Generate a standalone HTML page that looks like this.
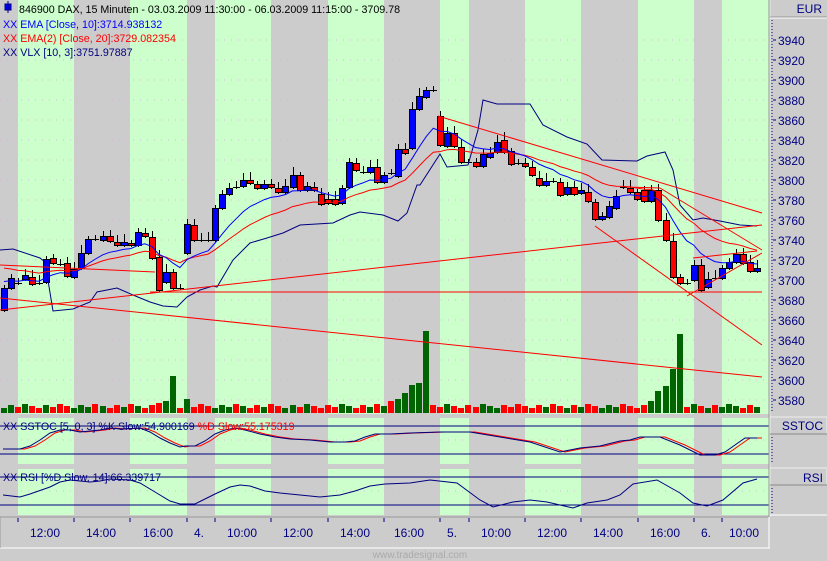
<!DOCTYPE html>
<html><head><meta charset="utf-8"><style>
html,body{margin:0;padding:0;background:#cccccc;width:827px;height:561px;overflow:hidden}
svg{display:block}
text{font-family:"Liberation Sans",Arial,sans-serif}
.lg{font-size:10.7px}
</style></head><body>
<svg id="s" width="827" height="561" xmlns="http://www.w3.org/2000/svg">
<rect width="827" height="561" fill="#cccccc"/>
<g id="bands"></g>
<g id="grid"></g>
<g id="main"></g>
<!-- legends -->
<rect x="5" y="4" width="6" height="6" fill="#0000ff" stroke="#000080"/>
<line x1="8" y1="1" x2="8" y2="13" stroke="#000080"/>
<text class="lg" x="19" y="13" fill="#000">846900  DAX, 15 Minuten - 03.03.2009 11:30:00 - 06.03.2009 11:15:00 - 3709.78</text>
<text class="lg" x="3" y="28" fill="#0000ff">XX EMA [Close, 10]:3714.938132</text>
<text class="lg" x="3" y="42" fill="#ff0000">XX EMA(2) [Close, 20]:3729.082354</text>
<text class="lg" x="3" y="56" fill="#000080">XX VLX [10, 3]:3751.97887</text>
<text class="lg" x="3" y="430" fill="#000080">XX SSTOC [5, 0, 3] %K Slow:54.900169 <tspan fill="#ff0000">%D Slow:55.175319</tspan></text>
<text class="lg" x="3" y="481" fill="#000080">XX RSI [%D Slow, 14]:66.339717</text>
<!-- right axis -->
<line x1="770" y1="0" x2="770" y2="517" stroke="#e8e8e8"/>
<line x1="769" y1="0" x2="769" y2="517" stroke="#999"/>
<line x1="770" y1="17" x2="827" y2="17" stroke="#999"/>
<line x1="770" y1="18" x2="827" y2="18" stroke="#fff"/>
<text x="822" y="13" font-size="12" fill="#000080" text-anchor="end">EUR</text>
<line x1="772" y1="20" x2="772" y2="413" stroke="#000080" stroke-dasharray="1,2"/>
<g id="axis" font-size="12" fill="#000080"></g>
<rect x="770" y="417" width="57" height="17" fill="#cccccc" stroke="#eee"/>
<line x1="770" y1="434" x2="827" y2="434" stroke="#888"/>
<text x="823" y="430" font-size="12" fill="#000080" text-anchor="end">SSTOC</text>
<line x1="772" y1="437" x2="772" y2="463" stroke="#000080" stroke-dasharray="1,2"/>
<rect x="770" y="468" width="57" height="17" fill="#cccccc" stroke="#eee"/>
<line x1="770" y1="485" x2="827" y2="485" stroke="#888"/>
<text x="823" y="482" font-size="12" fill="#000080" text-anchor="end">RSI</text>
<line x1="772" y1="488" x2="772" y2="514" stroke="#000080" stroke-dasharray="1,2"/>
<line x1="770" y1="515" x2="827" y2="515" stroke="#fff"/>
<!-- time axis -->
<line x1="0" y1="517" x2="769" y2="517" stroke="#999"/>
<line x1="0" y1="548" x2="770" y2="548" stroke="#fff"/>
<line x1="769" y1="517" x2="769" y2="548" stroke="#fff"/>
<line x1="0" y1="517" x2="0" y2="548" stroke="#999"/>
<g id="time" font-size="12" fill="#000080"></g>
<text x="420" y="558" font-size="10" fill="#aaaaaa" text-anchor="middle">www.tradesignal.com</text>
</svg>
<script>
var NS="http://www.w3.org/2000/svg";
function el(p,t,a){var e=document.createElementNS(NS,t);for(var k in a)e.setAttribute(k,a[k]);p.appendChild(e);return e;}
var s=document.getElementById('s');
var bands=document.getElementById('bands'),grid=document.getElementById('grid'),main=document.getElementById('main');
var gb=[[18,74],[130,187],[215,271],[328,384],[440,469],[525,581],[638,694],[722,769]];
var panels=[[0,414],[418,464],[469,515]];
panels.forEach(function(p){gb.forEach(function(b){el(bands,'rect',{x:b[0],y:p[0],width:b[1]-b[0],height:p[1]-p[0],fill:'#ccffcc'});});});
for(var y=40;y<=400;y+=20)el(grid,'line',{x1:0,y1:y,x2:769,y2:y,stroke:'#d8b8d8','stroke-dasharray':'1,6'});
[440,491].forEach(function(y){el(grid,'line',{x1:0,y1:y,x2:769,y2:y,stroke:'#d8b8d8','stroke-dasharray':'1,6'});});
var ax=document.getElementById('axis');
for(var p=3940;p>=3580;p-=20){var yy=3980-p;el(ax,'line',{x1:773,y1:yy,x2:776,y2:yy,stroke:'#000080'});var t=el(ax,'text',{x:778,y:yy+5});t.textContent=p;}
var tg=document.getElementById('time');
[18,74,130,187,215,271,328,384,440,469,525,581,638,694,722].forEach(function(x){el(tg,'line',{x1:x,y1:518,x2:x,y2:522,stroke:'#000080'});});
[[45,'12:00'],[101,'14:00'],[158,'16:00'],[199,'4.'],[242,'10:00'],[298,'12:00'],[355,'14:00'],[409,'16:00'],[452,'5.'],[496,'10:00'],[552,'12:00'],[608,'14:00'],[665,'16:00'],[706,'6.'],[744,'10:00']].forEach(function(a){var t=el(tg,'text',{x:a[0],y:537,'text-anchor':'middle'});t.textContent=a[1];});
var C="b288-310 b278-288 d283 b275-279 r277-284 d283 b259-282 r258-263 d264 r263-276 b269-277 b253-268 b239-253 d239 b236-240 r236-241 r242-245 b242-245 r243-245 b232-245 r233-236 r237-258 r257-290 b272-282 r272-288 d288 b224-253 r225-240 d240 d240 b208-240 b194-208 b188-194 d187 b180-186 r180-183 r184-188 b184-188 r184-187 r188-192 b186-192 b175-187 r175-190 b186-190 r187-190 r194-204 r199-203 r199-204 b188-203 b162-187 r163-170 d172 b167-172 r167-182 b175-182 d173 b149-176 r149-153 b109-148 b96-109 b90-97 d90 "+
"r116-145 b133-146 r133-146 r147-162 d162 r162-166 b154-166 b153-157 b142-152 r140-152 r151-164 d163 r163-166 r167-175 r178-185 b181-185 d181 r182-195 b187-194 r187-194 b190-193 r192-201 r202-219 b216-219 b206-217 b196-208 d187 r188-192 r192-199 r190-201 b190-201 r190-220 r220-240 r241-277 r277-283 d283 b265-280 r265-290 b279-287 d278 b268-278 b262-268 b254-262 r254-263 r262-271 b268-271";
var bars=C.split(' ');var n=bars.length;var step=(757-4)/(n-1);
var vol=[];var closes=[];
bars.forEach(function(b,i){
 var c=b[0],r=b.slice(1).split('-').map(Number);var top=r[0],bot=r[1]||r[0];
 var x=Math.round(4+i*step);
 var wu=3+((i*7)%6),wd=2+((i*5)%5);
 el(main,'line',{x1:x+0.5,y1:top-wu,x2:x+0.5,y2:bot+wd,stroke:'#000','stroke-width':1});
 if(c=='d'){el(main,'line',{x1:x-3,y1:top+0.5,x2:x+4,y2:top+0.5,stroke:'#000'});closes.push(top);}
 else{el(main,'rect',{x:x-2.5,y:top+0.5,width:6,height:Math.max(bot-top,2),fill:c=='b'?'#0000ff':'#ff0000',stroke:'#000'});closes.push(c=='b'?top:bot);}
 var h=5+((i*13)%5);
 vol.push([x,h,c=='b'?'#006400':'#ff0000']);
});
var spec={172:37,425:82,418:30,411:28,404:20,397:14,390:12,680:79,673:44,666:27,659:22,652:12,165:12,158:10,186:14};
var greens={172:1,425:1,418:1,411:1,404:1,397:1,680:1,673:1,666:1,659:1};
vol.forEach(function(v){for(var k in spec){if(Math.abs(v[0]-k)<=3){v[1]=spec[k];if(greens[k])v[2]='#006400';}}
 el(main,'rect',{x:v[0]-3,y:413-v[1],width:6,height:v[1],fill:v[2]});});
function ema(a,init){var al=2/(a+1),e=init,o=[];closes.forEach(function(c){e=e+al*(c-e);o.push(e);});return o;}
function pl(arr,col){var pts=arr.map(function(v,i){return (4+i*step).toFixed(1)+','+v.toFixed(1);}).join(' ');el(main,'polyline',{points:pts,fill:'none',stroke:col,'stroke-width':1});}
function pp(pts,col,g){el(g||main,'polyline',{points:pts,fill:'none',stroke:col,'stroke-width':1});}
pp("0,250 13,249 40,258 45,262 53,311 73,309 90,302 97,292 117,288 133,295 150,302 163,306 177,307 187,297 200,290 213,286 217,287 233,260 250,243 267,238 283,233 300,225 333,223 350,215 360,212 383,215 398,221 407,213 417,185 420,185 440,154 447,167 468,165 478,130 483,100 497,104 530,104 543,125 567,137 587,144 602,160 637,161 647,156 665,152 673,170 680,205 693,220 703,218 720,221 740,225 757,226","#000080");
pl(ema(20,266),'#ff0000');
pl(ema(10,280),'#0000ff');
[[150,292,762,292],[0,310,762,225],[0,298,762,377],[0,265,155,272],[438,116,762,213],[595,226,762,345],[687,296,762,253],[625,187,660,188],[660,188,762,250],[693,258,757,251]].forEach(function(l){el(main,'line',{x1:l[0],y1:l[1],x2:l[2],y2:l[3],stroke:'#ff0000','stroke-width':1});});
[426,454,477,505].forEach(function(y){el(main,'line',{x1:0,y1:y,x2:769,y2:y,stroke:'#000080'});});
var K="3,449 20,449 30,446 40,440 50,433 60,430 70,430 80,432 90,431 100,430 110,428 120,429 140,428 150,432 160,438 170,443 180,447 185,446 195,446 205,441 215,434 225,430 235,428 245,430 260,434 275,437 290,439 310,440 330,442 345,442 355,441 365,437 375,434 390,434 410,433 440,432 470,432 500,437 530,442 560,452 580,448 600,446 620,441 630,440 640,437 660,437 680,445 690,450 700,455 715,455 725,452 735,445 745,438 757,438";
var D=K.split(' ').map(function(p){var a=p.split(',');return (+a[0]+5)+','+a[1];}).join(' ');
pp(D,'#ff0000');pp(K,'#000080');
pp("3,495 20,497 30,494 50,487 60,482 70,480 80,481 90,482 100,481 110,479 130,480 140,483 155,492 170,501 180,504 195,504 205,499 215,494 230,487 240,485 250,486 265,491 280,493 300,495 320,497 340,495 355,491 370,486 385,484 410,483 430,480 457,483 480,500 493,507 513,502 530,500 547,502 573,508 587,503 607,500 620,495 633,484 657,480 680,493 693,503 707,506 723,500 743,483 757,479","#000080");
</script>
</body></html>
